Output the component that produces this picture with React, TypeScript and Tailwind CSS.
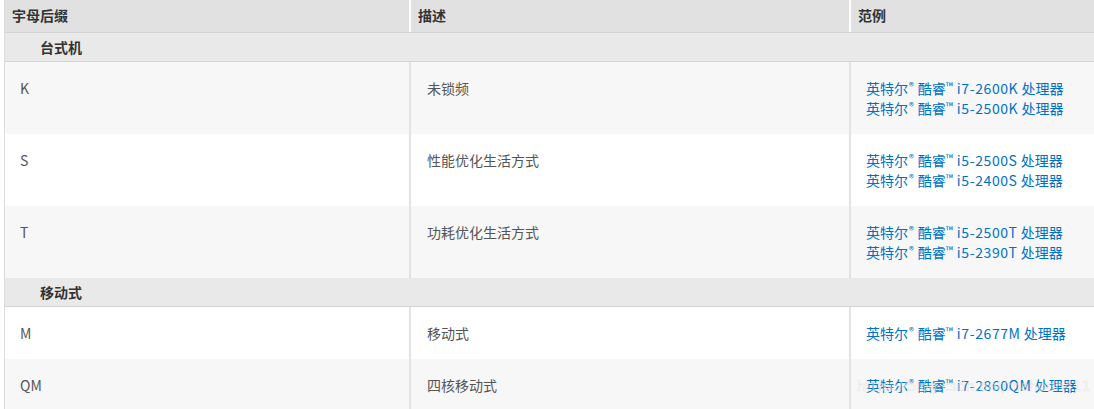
import React from "react";

type Row = { s: string; d: string; ex: string[] };
type Group = { name: string; rows: Row[] };

const groups: Group[] = [
  {
    name: "台式机",
    rows: [
      { s: "K", d: "未锁频", ex: ["i7-2600K", "i5-2500K"] },
      { s: "S", d: "性能优化生活方式", ex: ["i5-2500S", "i5-2400S"] },
      { s: "T", d: "功耗优化生活方式", ex: ["i5-2500T", "i5-2390T"] },
    ],
  },
  {
    name: "移动式",
    rows: [
      { s: "M", d: "移动式", ex: ["i7-2677M"] },
      { s: "QM", d: "四核移动式", ex: ["i7-2860QM"] },
    ],
  },
];

function Proc({ model }: { model: string }) {
  return (
    <div className="h-5 leading-5 whitespace-nowrap">
      <a className="text-[#0071c5] no-underline" href="#">
        英特尔<span className="text-[10px] leading-[0] relative top-[-4px] ml-[1px] mr-[4px]">®</span>酷睿
        <span className="text-[10px] leading-[0] relative top-[-4px] mr-[4px]">™</span>
        <span className="tracking-[0.6px]">{model}</span> 处理器
      </a>
    </div>
  );
}

export default function App() {
  let idx = 0;
  return (
    <div
      className="relative w-[1094px] h-[409px] overflow-hidden bg-white pl-1 text-[14px] text-[#555]"
      style={{ fontFamily: '"Noto Sans CJK SC", "Noto Sans", sans-serif' }}
    >
      <div className="border-l border-[#dcdcdc]">
        <div className="flex h-[33px] border-b border-[#d4d4d4] font-bold text-[#333]">
          <div className="w-[404px] bg-[#e1e1e1] pl-[7px] leading-[30px]">宇母后缀</div>
          <div className="w-[2px] bg-white" />
          <div className="w-[438px] bg-[#e1e1e1] pl-[7px] leading-[30px]">描述</div>
          <div className="w-[2px] bg-white" />
          <div className="flex-1 bg-[#e1e1e1] pl-[7px] leading-[30px]">范例</div>
        </div>
        {groups.map((g) => (
          <div key={g.name}>
            <div className="h-[29px] bg-[#e9e9e9] border-b border-[#d4d4d4] pl-[35px] font-bold text-[#333] leading-[28px]">
              {g.name}
            </div>
            {g.rows.map((r) => {
              const odd = idx++ % 2 === 0;
              return (
                <div key={r.s} className={`flex ${odd ? "bg-[#f7f7f7]" : "bg-white"}`}>
                  <div className="w-[404px] pl-[15px] pt-4 pb-4 leading-5">{r.s}</div>
                  <div className="w-[2px] bg-[#e3e3e3]" />
                  <div className="w-[438px] pl-[16px] pt-4 pb-4 leading-5">{r.d}</div>
                  <div className="w-[2px] bg-[#e3e3e3]" />
                  <div className="flex-1 pl-[15px] pt-4 pb-4">
                    {r.ex.map((m) => (
                      <Proc key={m} model={m} />
                    ))}
                  </div>
                </div>
              );
            })}
          </div>
        ))}
      </div>
      <div
        className="pointer-events-none absolute left-[857px] top-[376px] text-[14px] text-[rgba(255,255,255,0.5)] whitespace-nowrap"
        style={{ fontFamily: '"DejaVu Sans", sans-serif', WebkitTextStroke: "0.5px rgba(170,170,170,0.3)" }}
      >
        https://blog.csdn.net/mahoon411
      </div>
    </div>
  );
}
